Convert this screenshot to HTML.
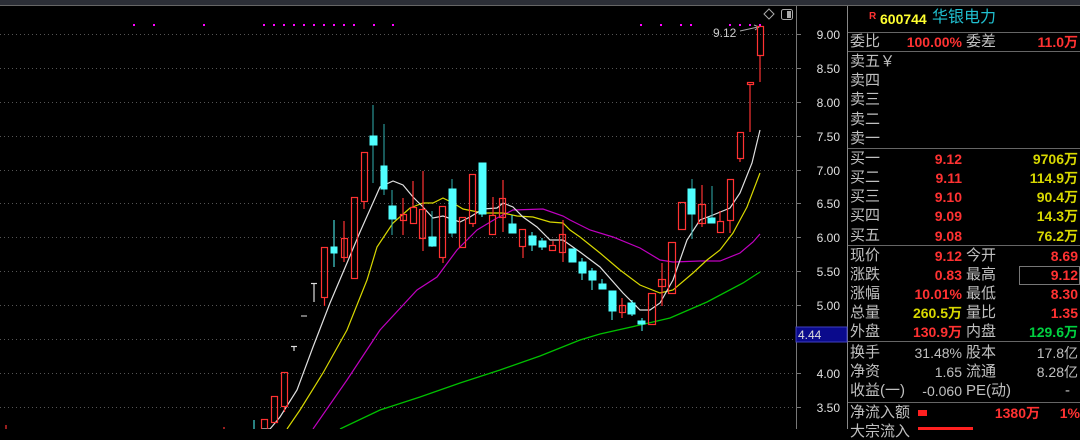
<!DOCTYPE html>
<html><head><meta charset="utf-8"><style>
*{margin:0;padding:0}
body{width:1080px;height:429px;background:#000;overflow:hidden;position:relative;font-family:"Liberation Sans","Noto Sans CJK SC",sans-serif}
.t{position:absolute;font-size:15px;line-height:16px;white-space:nowrap}
.g{color:#c0c0c0}.r{color:#ff3232}.y{color:#d8d800}.gr{color:#00d040}
.r,.y,.gr{font-weight:bold;font-size:14px}
.ax{position:absolute;left:800px;width:40px;text-align:right;font-size:12px;color:#e0e0e0;line-height:14px}
</style></head><body>
<svg width="1080" height="429" style="position:absolute;left:0;top:0">
<rect x="0" y="0" width="1080" height="5" fill="#2b2e36"/>
<line x1="0" y1="5.5" x2="1080" y2="5.5" stroke="#666"/>
<g stroke="#555" stroke-dasharray="1,3">
<line x1="0" y1="34.5" x2="795" y2="34.5"/><line x1="0" y1="68.5" x2="795" y2="68.5"/><line x1="0" y1="102.5" x2="795" y2="102.5"/><line x1="0" y1="136.5" x2="795" y2="136.5"/><line x1="0" y1="170.5" x2="795" y2="170.5"/><line x1="0" y1="203.5" x2="795" y2="203.5"/><line x1="0" y1="237.5" x2="795" y2="237.5"/><line x1="0" y1="271.5" x2="795" y2="271.5"/><line x1="0" y1="305.5" x2="795" y2="305.5"/><line x1="0" y1="339.5" x2="795" y2="339.5"/><line x1="0" y1="373.5" x2="795" y2="373.5"/><line x1="0" y1="407.5" x2="795" y2="407.5"/>
</g>
<line x1="796.5" y1="6" x2="796.5" y2="429" stroke="#777"/>
<g stroke="#777"><line x1="796" y1="34.5" x2="801" y2="34.5"/><line x1="796" y1="68.5" x2="801" y2="68.5"/><line x1="796" y1="102.5" x2="801" y2="102.5"/><line x1="796" y1="136.5" x2="801" y2="136.5"/><line x1="796" y1="170.5" x2="801" y2="170.5"/><line x1="796" y1="203.5" x2="801" y2="203.5"/><line x1="796" y1="237.5" x2="801" y2="237.5"/><line x1="796" y1="271.5" x2="801" y2="271.5"/><line x1="796" y1="305.5" x2="801" y2="305.5"/><line x1="796" y1="373.5" x2="801" y2="373.5"/><line x1="796" y1="407.5" x2="801" y2="407.5"/></g>
<line x1="847.5" y1="6" x2="847.5" y2="429" stroke="#888"/>
<g stroke="#666"><line x1="848" y1="32.5" x2="1080" y2="32.5"/><line x1="848" y1="51.5" x2="1080" y2="51.5"/><line x1="848" y1="148.5" x2="1080" y2="148.5"/><line x1="848" y1="245.5" x2="1080" y2="245.5"/><line x1="848" y1="341.5" x2="1080" y2="341.5"/><line x1="848" y1="402.5" x2="1080" y2="402.5"/></g>
<rect x="1019.5" y="266.5" width="60" height="18" fill="none" stroke="#777"/>
<rect x="796" y="327" width="51" height="15" fill="#0a0a8c" stroke="#4040c0"/>
<g fill="#ff00ff"><rect x="133" y="24" width="2" height="2"/><rect x="153" y="24" width="2" height="2"/><rect x="203" y="24" width="2" height="2"/><rect x="263" y="24" width="2" height="2"/><rect x="273" y="24" width="2" height="2"/><rect x="283" y="24" width="2" height="2"/><rect x="293" y="24" width="2" height="2"/><rect x="303" y="24" width="2" height="2"/><rect x="313" y="24" width="2" height="2"/><rect x="323" y="24" width="2" height="2"/><rect x="333" y="24" width="2" height="2"/><rect x="343" y="24" width="2" height="2"/><rect x="353" y="24" width="2" height="2"/><rect x="373" y="24" width="2" height="2"/><rect x="392" y="24" width="2" height="2"/><rect x="640" y="24" width="2" height="2"/><rect x="660" y="24" width="2" height="2"/><rect x="680" y="24" width="2" height="2"/><rect x="690" y="24" width="2" height="2"/><rect x="729" y="24" width="2" height="2"/><rect x="739" y="24" width="2" height="2"/><rect x="749" y="24" width="2" height="2"/><rect x="759" y="24" width="2" height="2"/></g>
<path d="M769 9 L774 14 L769 19 L764 14 Z" fill="none" stroke="#aaa"/>
<rect x="781.5" y="9.5" width="11" height="10" rx="2" fill="none" stroke="#aaa"/><rect x="787" y="11" width="4" height="7" fill="#aaa"/>
<path d="M740 31 L758 27" stroke="#aaa" fill="none"/><path d="M754 25 L759 27 L755 30" stroke="#aaa" fill="none"/>
<polyline fill="none" stroke="#00c000" stroke-width="1.3" points="340,429 380,410 420,397 460,383 500,370 540,356 580,340 600,334 640,325 670,318 707,302 743,283 760,272"/>
<polyline fill="none" stroke="#c000c0" stroke-width="1.2" points="313,429 347,380 380,330 417,290 437,277 457,250 477,230 497,218 513,210 543,209 563,216 570,220 590,230 613,237 640,248 660,260 673,262 700,261 720,261 740,253 753,242 760,234"/>
<polyline fill="none" stroke="#d8d800" stroke-width="1.2" points="287,429 300,410 323,373 347,330 367,280 377,247 393,223 410,208 423,203 433,203 443,198 453,203 463,209 483,213 503,213 517,216 533,217 550,222 563,223 570,230 580,237 600,253 620,270 640,285 660,293 673,290 693,273 707,260 720,250 733,233 747,207 760,173"/>
<polyline fill="none" stroke="#e0e0e0" stroke-width="1.2" points="262,429 270,429 280,417 297,390 313,347 330,303 347,263 360,232 372,205 380,187 393,181 403,185 413,197 423,207 433,218 443,216 460,222 470,217 483,209 497,208 503,203 513,207 523,217 537,227 550,240 563,240 580,252 600,267 623,293 640,310 650,310 660,303 673,280 687,240 700,220 713,215 730,208 740,193 752,163 760,130"/>
<g stroke="#ff3232" fill="none" stroke-width="1.2">
<line x1="6" y1="425" x2="6" y2="429"/><line x1="224" y1="427" x2="224" y2="429"/>
<rect x="261.5" y="419.5" width="6" height="12"/>
<rect x="271.5" y="396.5" width="6" height="26"/>
<line x1="284.5" y1="406" x2="284.5" y2="412"/><rect x="281.5" y="372.5" width="6" height="34"/>
<line x1="324.5" y1="297" x2="324.5" y2="306"/><rect x="321.5" y="247.5" width="6" height="50"/>
<line x1="344" y1="221" x2="344" y2="262"/><rect x="341.5" y="238.5" width="6" height="19"/>
<rect x="351.5" y="197.5" width="6" height="81"/>
<line x1="364" y1="201" x2="364" y2="209"/><rect x="361.5" y="152.5" width="6" height="49"/>
<line x1="403" y1="198" x2="403" y2="235"/><rect x="400.5" y="214.5" width="6" height="6"/>
<line x1="413" y1="181" x2="413" y2="207"/><rect x="410.5" y="207.5" width="6" height="16"/>
<line x1="423" y1="171" x2="423" y2="251"/><rect x="419.5" y="209.5" width="6" height="29"/>
<line x1="443" y1="257" x2="443" y2="263"/><rect x="439.5" y="206.5" width="6" height="51"/>
<rect x="459.5" y="217.5" width="6" height="30"/>
<line x1="473" y1="223" x2="473" y2="227"/><rect x="469.5" y="174.5" width="6" height="49"/>
<line x1="493" y1="197" x2="493" y2="215"/><rect x="489.5" y="215.5" width="6" height="19"/>
<line x1="503" y1="180" x2="503" y2="232"/><rect x="499.5" y="198.5" width="6" height="19"/>
<line x1="523" y1="246" x2="523" y2="258"/><rect x="519.5" y="229.5" width="6" height="17"/>
<line x1="553" y1="241" x2="553" y2="245"/><rect x="549.5" y="245.5" width="6" height="5"/>
<line x1="563" y1="220" x2="563" y2="262"/><rect x="559.5" y="234.5" width="6" height="18"/>
<line x1="622" y1="298" x2="622" y2="318"/><rect x="619.5" y="305.5" width="6" height="7"/>
<rect x="648.5" y="293.5" width="7" height="31"/>
<line x1="662" y1="263" x2="662" y2="306"/><rect x="658.5" y="279.5" width="7" height="7"/>
<rect x="668.5" y="242.5" width="7" height="51"/>
<rect x="678.5" y="202.5" width="7" height="27"/>
<line x1="702" y1="185" x2="702" y2="227"/><rect x="698.5" y="204.5" width="7" height="19"/>
<line x1="720" y1="211" x2="720" y2="221"/><rect x="717.5" y="221.5" width="6" height="11"/>
<line x1="730" y1="220" x2="730" y2="233"/><rect x="727.5" y="179.5" width="6" height="41"/>
<line x1="740" y1="158" x2="740" y2="162"/><rect x="737.5" y="132.5" width="6" height="26"/>
<line x1="750" y1="84" x2="750" y2="132"/><rect x="747.5" y="82.5" width="6" height="2"/>
<line x1="760" y1="55" x2="760" y2="82"/><rect x="757.5" y="26.5" width="6" height="29"/>
</g>
<g fill="#50ffff" stroke="#50ffff">
<line x1="254" y1="420" x2="254" y2="429"/>
<line x1="334" y1="220" x2="334" y2="267"/><rect x="331" y="247" width="6" height="6"/>
<line x1="373" y1="105" x2="373" y2="183" stroke="#30b0b0"/><rect x="370" y="136" width="7" height="9"/>
<line x1="384" y1="124" x2="384" y2="195" stroke="#30b0b0"/><rect x="381" y="166" width="6" height="23"/>
<line x1="392" y1="190" x2="392" y2="235" stroke="#30b0b0"/><rect x="389" y="206" width="7" height="13"/>
<line x1="432" y1="211" x2="432" y2="247" stroke="#30b0b0"/><rect x="429" y="237" width="7" height="9"/>
<line x1="452" y1="179" x2="452" y2="237" stroke="#30b0b0"/><rect x="449" y="189" width="7" height="44"/>
<line x1="482" y1="163" x2="482" y2="217"/><rect x="479" y="163" width="7" height="51"/>
<line x1="512" y1="215" x2="512" y2="233"/><rect x="509" y="224" width="7" height="9"/>
<line x1="532" y1="232" x2="532" y2="251"/><rect x="529" y="236" width="7" height="9"/>
<line x1="542" y1="238" x2="542" y2="250"/><rect x="539" y="241" width="7" height="6"/>
<rect x="569" y="249" width="7" height="13"/>
<line x1="582" y1="258" x2="582" y2="280"/><rect x="579" y="262" width="7" height="11"/>
<line x1="592" y1="268" x2="592" y2="290"/><rect x="589" y="271" width="7" height="9"/>
<line x1="602" y1="279" x2="602" y2="289"/><rect x="599" y="284" width="7" height="5"/>
<line x1="612" y1="291" x2="612" y2="320"/><rect x="609" y="291" width="7" height="20"/>
<line x1="632" y1="300" x2="632" y2="316"/><rect x="628" y="303" width="7" height="11"/>
<line x1="642" y1="318" x2="642" y2="331"/><rect x="638" y="321" width="7" height="3"/>
<line x1="692" y1="179" x2="692" y2="239" stroke="#30b0b0"/><rect x="688" y="189" width="7" height="25"/>
<line x1="712" y1="186" x2="712" y2="223" stroke="#30b0b0"/><rect x="708" y="218" width="7" height="5"/>
</g>
<g stroke="#ddd" stroke-width="1.2"><line x1="311" y1="283.5" x2="317" y2="283.5"/><line x1="314" y1="284" x2="314" y2="302"/><line x1="291" y1="346.5" x2="297" y2="346.5"/><line x1="294" y1="347" x2="294" y2="351"/></g>
<line x1="301" y1="316" x2="307" y2="316" stroke="#999" stroke-width="1.5"/>
</svg>
<div class="t" style="left:713px;top:25px;font-size:12px;color:#ccc">9.12</div>
<div class="ax" style="top:28px">9.00</div><div class="ax" style="top:62px">8.50</div><div class="ax" style="top:96px">8.00</div><div class="ax" style="top:130px">7.50</div><div class="ax" style="top:164px">7.00</div><div class="ax" style="top:197px">6.50</div><div class="ax" style="top:231px">6.00</div><div class="ax" style="top:265px">5.50</div><div class="ax" style="top:299px">5.00</div><div class="ax" style="top:367px">4.00</div><div class="ax" style="top:401px">3.50</div>
<div class="t" style="left:798px;top:328px;font-size:12px;line-height:14px;color:#ddd">4.44</div>
<div class="t" style="left:869px;top:9px;font-size:10px;color:#ff3232;font-weight:bold">R</div>
<div class="t" style="left:880px;top:11px;color:#ffff30;font-weight:bold;font-size:14px">600744</div>
<div class="t" style="left:932px;top:10px;color:#20c0d0;font-size:16px">华银电力</div>
<div class="t g" style="left:850px;top:34px">委比</div><div class="t r" style="left:900px;top:34px;width:62px;text-align:right">100.00%</div><div class="t g" style="left:966px;top:34px">委差</div><div class="t r" style="left:1000px;top:34px;width:78px;text-align:right">11.0万</div>
<div class="t g" style="left:850px;top:54px">卖五￥</div><div class="t g" style="left:850px;top:73px">卖四</div><div class="t g" style="left:850px;top:92px">卖三</div><div class="t g" style="left:850px;top:112px">卖二</div><div class="t g" style="left:850px;top:131px">卖一</div>
<div class="t g" style="left:850px;top:151px">买一</div><div class="t r" style="left:900px;top:151px;width:62px;text-align:right">9.12</div><div class="t y" style="left:1000px;top:151px;width:78px;text-align:right">9706万</div>
<div class="t g" style="left:850px;top:170px">买二</div><div class="t r" style="left:900px;top:170px;width:62px;text-align:right">9.11</div><div class="t y" style="left:1000px;top:170px;width:78px;text-align:right">114.9万</div>
<div class="t g" style="left:850px;top:189px">买三</div><div class="t r" style="left:900px;top:189px;width:62px;text-align:right">9.10</div><div class="t y" style="left:1000px;top:189px;width:78px;text-align:right">90.4万</div>
<div class="t g" style="left:850px;top:208px">买四</div><div class="t r" style="left:900px;top:208px;width:62px;text-align:right">9.09</div><div class="t y" style="left:1000px;top:208px;width:78px;text-align:right">14.3万</div>
<div class="t g" style="left:850px;top:228px">买五</div><div class="t r" style="left:900px;top:228px;width:62px;text-align:right">9.08</div><div class="t y" style="left:1000px;top:228px;width:78px;text-align:right">76.2万</div>
<div class="t g" style="left:850px;top:248px">现价</div><div class="t r" style="left:900px;top:248px;width:62px;text-align:right">9.12</div><div class="t g" style="left:966px;top:248px">今开</div><div class="t r" style="left:1000px;top:248px;width:78px;text-align:right">8.69</div>
<div class="t g" style="left:850px;top:267px">涨跌</div><div class="t r" style="left:900px;top:267px;width:62px;text-align:right">0.83</div><div class="t g" style="left:966px;top:267px">最高</div><div class="t r" style="left:1000px;top:267px;width:78px;text-align:right">9.12</div>
<div class="t g" style="left:850px;top:286px">涨幅</div><div class="t r" style="left:900px;top:286px;width:62px;text-align:right">10.01%</div><div class="t g" style="left:966px;top:286px">最低</div><div class="t r" style="left:1000px;top:286px;width:78px;text-align:right">8.30</div>
<div class="t g" style="left:850px;top:305px">总量</div><div class="t y" style="left:900px;top:305px;width:62px;text-align:right">260.5万</div><div class="t g" style="left:966px;top:305px">量比</div><div class="t r" style="left:1000px;top:305px;width:78px;text-align:right">1.35</div>
<div class="t g" style="left:850px;top:324px">外盘</div><div class="t r" style="left:900px;top:324px;width:62px;text-align:right">130.9万</div><div class="t g" style="left:966px;top:324px">内盘</div><div class="t gr" style="left:1000px;top:324px;width:78px;text-align:right">129.6万</div>
<div class="t g" style="left:850px;top:345px">换手</div><div class="t g" style="left:900px;top:345px;width:62px;text-align:right;font-size:14px">31.48%</div><div class="t g" style="left:966px;top:345px">股本</div><div class="t g" style="left:1000px;top:345px;width:78px;text-align:right;font-size:14px">17.8亿</div>
<div class="t g" style="left:850px;top:364px">净资</div><div class="t g" style="left:900px;top:364px;width:62px;text-align:right;font-size:14px">1.65</div><div class="t g" style="left:966px;top:364px">流通</div><div class="t g" style="left:1000px;top:364px;width:78px;text-align:right;font-size:14px">8.28亿</div>
<div class="t g" style="left:850px;top:383px">收益(一)</div><div class="t g" style="left:900px;top:383px;width:62px;text-align:right;font-size:14px">-0.060</div><div class="t g" style="left:966px;top:383px">PE(动)</div><div class="t g" style="left:1000px;top:383px;width:70px;text-align:right">-</div>
<div class="t g" style="left:850px;top:405px">净流入额</div><div style="position:absolute;left:918px;top:410px;width:9px;height:6px;background:#ff2020"></div><div class="t r" style="left:960px;top:405px;width:80px;text-align:right">1380万</div><div class="t r" style="left:1050px;top:405px;width:30px;text-align:right">1%</div>
<div class="t g" style="left:850px;top:424px">大宗流入</div><div style="position:absolute;left:918px;top:427px;width:55px;height:3px;background:#ff2020"></div>
</body></html>
